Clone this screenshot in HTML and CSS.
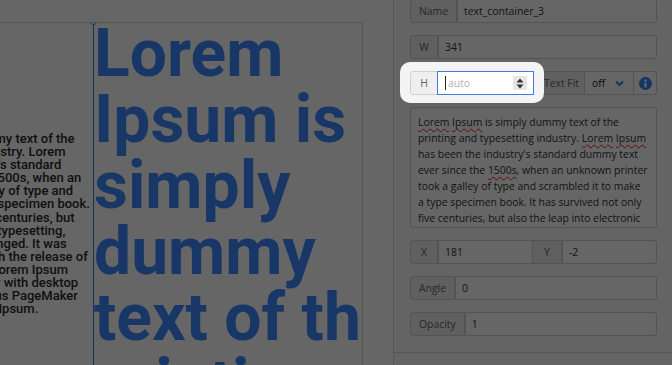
FILE: index.html
```html
<!DOCTYPE html>
<html lang="en">
<head>
  <meta charset="UTF-8">
  <meta name="viewport" content="width=device-width, initial-scale=1.0">
  <title>Editor - text_container_3</title>
  <link rel="stylesheet" href="styles.css">
</head>
<body>
  <div class="editor">
    <div class="workspace">
      <div class="page">
        <div class="text-box body-copy">Lorem Ipsum is simply dummy text of the printing and typesetting industry. Lorem Ipsum has been the industry's standard dummy text ever since the 1500s, when an unknown printer took a galley of type and scrambled it to make a type specimen book. It has survived not only five centuries, but also the leap into electronic typesetting, remaining essentially unchanged. It was popularised in the 1960s with the release of Letraset sheets containing Lorem Ipsum passages, and more recently with desktop publishing software like Aldus PageMaker including versions of Lorem Ipsum.</div>
        <div class="text-box headline selected">
          <span class="handle"></span>
          Lorem Ipsum is simply dummy text of the printing and typesetting industry.
        </div>
      </div>
    </div>

    <aside class="props">
      <div class="props-section">
        <div class="field">
          <span class="addon">Name</span>
          <input class="control" type="text" value="text_container_3">
        </div>
        <div class="field">
          <span class="addon addon-sq">W</span>
          <input class="control" type="text" value="341">
        </div>
        <div class="field">
          <div class="tour-target">
            <span class="addon addon-sq">H</span>
            <div class="spin">
              <span class="caret"></span>
              <input class="control" type="text" placeholder="auto">
              <span class="spin-btn">
                <svg width="8" height="11" viewBox="0 0 8 11"><path d="M4 0.5 L7.5 4.5 H0.5 Z M4 10.5 L7.5 6.5 H0.5 Z" fill="#333"/></svg>
              </span>
            </div>
          </div>
          <span class="addon addon-fit">Text Fit</span>
          <div class="select">
            <span>off</span>
            <svg width="9" height="7" viewBox="0 0 9 7"><path d="M1 1.5 L4.5 5 L8 1.5" fill="none" stroke="#3b86f5" stroke-width="2.2"/></svg>
          </div>
          <button class="info" type="button">
            <svg width="13" height="13" viewBox="0 0 13 13"><circle cx="6.5" cy="6.5" r="6.5" fill="#3b86f5"/><circle cx="6.5" cy="3.6" r="1.2" fill="#fff"/><rect x="5.4" y="5.6" width="2.2" height="4.8" rx="0.4" fill="#fff"/></svg>
          </button>
        </div>
        <div class="textarea"><span class="typo">Lorem</span> <span class="typo">Ipsum</span> is simply dummy text of the printing and typesetting industry. <span class="typo">Lorem</span> <span class="typo">Ipsum</span> has been the industry's standard dummy text ever since the <span class="typo">1500s</span>, when an unknown printer took a galley of type and scrambled it to make a type specimen book. It has survived not only five centuries, but also the leap into electronic typesetting, remaining essentially unchanged.</div>
        <div class="field">
          <span class="addon addon-sq">X</span>
          <input class="control" type="text" value="181">
          <span class="addon addon-y">Y</span>
          <input class="control" type="text" value="-2">
        </div>
        <div class="field">
          <span class="addon">Angle</span>
          <input class="control" type="text" value="0">
        </div>
        <div class="field">
          <span class="addon">Opacity</span>
          <input class="control" type="text" value="1">
        </div>
      </div>
    </aside>
  </div>

  <div class="tour-overlay"></div>
</body>
</html>
```

FILE: styles.css
```css
html, body {
  margin: 0;
  height: 100%;
  overflow: hidden;
}
body {
  font-family: 'Open Sans', sans-serif;
  font-size: 10.4px;
  color: #333;
  background: #fff;
}
.editor {
  display: flex;
  height: 100%;
}

/* canvas */
.workspace {
  flex: 1;
  position: relative;
  overflow: hidden;
  background: #fff;
}
.page {
  position: absolute;
  left: -88px;
  top: 22px;
  width: 451px;
  height: 700px;
  box-sizing: border-box;
  border: 1px solid #d2d2d2;
  background: #fff;
  overflow: hidden;
}
.text-box {
  position: absolute;
}
.body-copy {
  left: -79px;
  top: 109px;
  width: 261px;
  font-family: Roboto, sans-serif;
  font-weight: 500;
  font-size: 13px;
  line-height: 13.1px;
  color: #2a2a2a;
}
.headline {
  left: 181px;
  top: -2px;
  width: 341px;
  height: 800px;
  font-family: Roboto, sans-serif;
  font-weight: 700;
  font-size: 66px;
  line-height: 66px;
  color: #3d8bff;
}
.selected {
  border-left: 1px solid #3a7bff;
  margin-left: -1px;
}
.handle {
  position: absolute;
  left: -4px;
  top: -3px;
  width: 5px;
  height: 5px;
  border: 1px solid #3a7bff;
  border-radius: 50%;
  background: #fff;
}

/* properties panel */
.props {
  width: 279px;
  box-sizing: border-box;
  border-left: 1px solid #d6d6d6;
  background: #fafafa;
}
.props-section {
  display: flex;
  flex-direction: column;
  gap: 12px;
  margin-top: -1px;
  padding: 0 15px 16px 16px;
  border-bottom: 1px solid #d6d6d6;
}
.field {
  display: flex;
  height: 24px;
}
.field > * + *,
.tour-target > * + * {
  margin-left: -1px;
}
.addon {
  display: flex;
  align-items: center;
  justify-content: center;
  padding: 0 8px;
  border: 1px solid #d0d0d0;
  background: #efefef;
  color: #666;
  white-space: nowrap;
}
.field > :first-child,
.tour-target > :first-child {
  border-radius: 3px 0 0 3px;
}
.field > :last-child {
  border-radius: 0 3px 3px 0;
}
.addon-sq {
  width: 28px;
  box-sizing: border-box;
  padding: 0;
}
.addon-y {
  width: 30px;
  box-sizing: border-box;
  padding: 0;
}
.addon-fit {
  width: 52px;
  box-sizing: border-box;
  justify-content: flex-end;
  padding: 0 5px 0 0;
}
.control {
  flex: 1;
  min-width: 0;
  margin: 0;
  padding: 0 6px;
  border: 1px solid #d0d0d0;
  background: #fff;
  font: inherit;
  color: #333;
  outline: none;
}

/* highlighted H group */
.tour-target {
  position: relative;
  z-index: 20;
  display: flex;
}
.tour-target::before {
  content: '';
  position: absolute;
  top: -9px;
  bottom: -8px;
  left: -10px;
  right: -10px;
  border-radius: 10px;
  background: rgba(255, 255, 255, 0.93);
  z-index: -1;
}
.spin {
  position: relative;
  display: flex;
  width: 97px;
  box-sizing: border-box;
  border: 1px solid #3f7ae0;
  background: #fff;
}
.spin .control {
  border: none;
  padding-left: 10px;
}
.spin .control::placeholder {
  color: #b3b3b3;
}
.caret {
  position: absolute;
  left: 7px;
  top: 4px;
  width: 1px;
  height: 14px;
  background: #222;
}
.spin-btn {
  position: absolute;
  right: 6px;
  top: 4px;
  width: 14px;
  height: 14px;
  display: flex;
  align-items: center;
  justify-content: center;
  background: #e6e6e6;
}
.select {
  display: flex;
  align-items: center;
  gap: 10px;
  width: 50px;
  box-sizing: border-box;
  padding: 0 7px;
  border: 1px solid #d0d0d0;
  background: #fff;
  color: #222;
}
.info {
  display: flex;
  align-items: center;
  justify-content: center;
  width: 24px;
  padding: 0;
  border: 1px solid #d0d0d0;
  background: #fff;
  cursor: pointer;
}
.textarea {
  height: 121px;
  box-sizing: border-box;
  padding: 6px 8px 0 7px;
  border: 1px solid #d0d0d0;
  border-radius: 3px;
  background: #fff;
  line-height: 16px;
  color: #333;
  overflow: hidden;
}
.typo {
  text-decoration: underline wavy #e02020;
  text-decoration-thickness: 1px;
  text-underline-offset: 2px;
}

/* tour overlay */
.tour-overlay {
  position: fixed;
  inset: 0;
  z-index: 10;
  background: rgba(0, 0, 0, 0.6);
}
```
